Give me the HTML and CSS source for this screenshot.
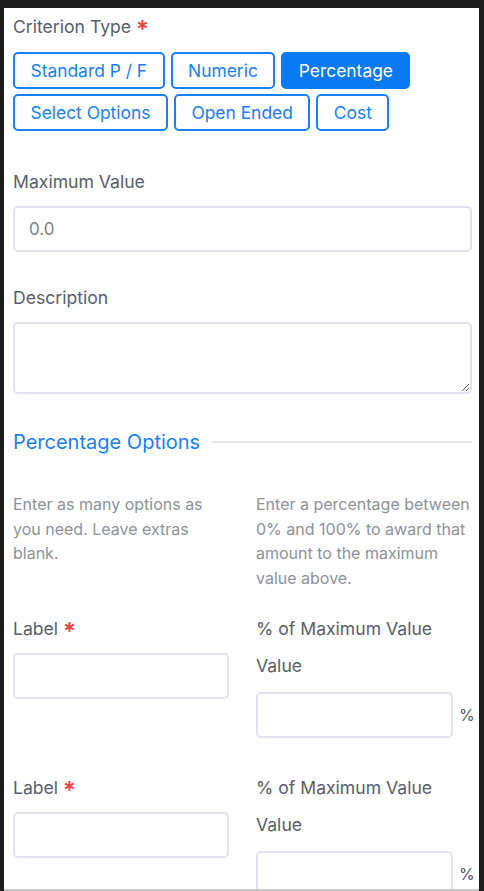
FILE: index.html
```html
<!DOCTYPE html>
<html lang="en">
  <head>
    <meta charset="UTF-8" />
    <meta name="viewport" content="width=device-width, initial-scale=1.0" />
    <title>Criterion</title>
    <link rel="stylesheet" href="styles.css">
  </head>
  <body>
    <div class="panel">
      <div class="field">
        <label class="lbl">Criterion Type <span class="req">*</span></label>
        <div class="types">
          <button class="type">Standard P / F</button>
          <button class="type">Numeric</button>
          <button class="type active">Percentage</button>
          <button class="type">Select Options</button>
          <button class="type">Open Ended</button>
          <button class="type">Cost</button>
        </div>
      </div>

      <div class="field">
        <label class="lbl" for="maxValue">Maximum Value</label>
        <input type="text" id="maxValue" class="inp" placeholder="0.0" />
      </div>

      <div class="field">
        <label class="lbl" for="desc">Description</label>
        <textarea id="desc" class="inp area"></textarea>
      </div>

      <div class="section">
        <h3>Percentage Options</h3>
        <span class="rule"></span>
      </div>

      <div class="cols help">
        <p>Enter as many options as you need. Leave extras blank.</p>
        <p>Enter a percentage between 0% and 100% to award that amount to the maximum value above.</p>
      </div>

      <div class="cols option">
        <div>
          <label class="lbl">Label <span class="req">*</span></label>
          <input type="text" class="inp" />
        </div>
        <div>
          <div class="lbl">% of Maximum Value</div>
          <label class="lbl sub">Value</label>
          <div class="pct">
            <input type="text" class="inp" />
            <span>%</span>
          </div>
        </div>
      </div>

      <div class="cols option">
        <div>
          <label class="lbl">Label <span class="req">*</span></label>
          <input type="text" class="inp" />
        </div>
        <div>
          <div class="lbl">% of Maximum Value</div>
          <label class="lbl sub">Value</label>
          <div class="pct">
            <input type="text" class="inp" />
            <span>%</span>
          </div>
        </div>
      </div>
    </div>
  </body>
</html>
```

FILE: styles.css
```css
html, body {
  margin: 0;
  height: 100%;
}

body {
  background-color: #1d1d1d;
  font-family: Inter, "Noto Sans", sans-serif;
  overflow: hidden;
}

.panel {
  margin: 8px 5px 0 4px;
  height: calc(100% - 8px);
  box-sizing: border-box;
  background-color: #fff;
  border-bottom: 2px solid #c8c8c8;
  overflow: hidden;
  padding: 6px 7px 0 9px;
}

.field {
  margin-bottom: 33px;
}

.field:first-child {
  margin-bottom: 38px;
}

.lbl {
  display: block;
  font-size: 17.6px;
  line-height: 26px;
  color: #585e6c;
  margin-bottom: 11px;
}

.req {
  color: #ef4444;
  font-size: 24px;
  font-weight: 600;
  line-height: 0;
  vertical-align: -5px;
}

.types {
  display: flex;
  flex-wrap: wrap;
  gap: 5px 6px;
  margin-top: 12px;
}

.type {
  font-family: inherit;
  font-size: 17.4px;
  line-height: 21px;
  padding: 6px 15.5px;
  border: 2px solid #1a80f6;
  border-radius: 5px;
  background-color: #fff;
  color: #1a80f6;
  cursor: pointer;
}

.type.active {
  background-color: #0a79f4;
  border-color: #0a79f4;
  color: #fff;
}

.inp {
  display: block;
  width: 100%;
  box-sizing: border-box;
  height: 46px;
  border: 2px solid #e0e4ef;
  border-radius: 5px;
  padding: 0 14px;
  font-family: inherit;
  font-size: 17px;
  color: #333;
  outline: none;
}

.inp::placeholder {
  color: #7d828c;
}

.area {
  height: 72px;
  padding: 10px 14px;
  resize: vertical;
}

.section {
  display: flex;
  align-items: center;
  gap: 12px;
  margin-top: 34px;
}

.section h3 {
  margin: 0;
  font-size: 20px;
  line-height: 28px;
  font-weight: 400;
  color: #1a80f6;
}

.rule {
  flex: 1;
  height: 2px;
  background-color: #e6e7ec;
}

.cols {
  display: grid;
  grid-template-columns: 1fr 1fr;
  column-gap: 27px;
}

.help {
  margin-top: 36px;
  margin-bottom: 26px;
}

.help p {
  margin: 0;
  font-size: 16px;
  line-height: 24.5px;
  color: #8e939b;
}

.option {
  margin-bottom: 37px;
}

.sub {
  margin-top: 10px;
  margin-bottom: 13px;
}

.pct {
  display: flex;
  align-items: center;
  gap: 6px;
}

.pct span {
  font-size: 16px;
  color: #525968;
  width: 13px;
}
```
